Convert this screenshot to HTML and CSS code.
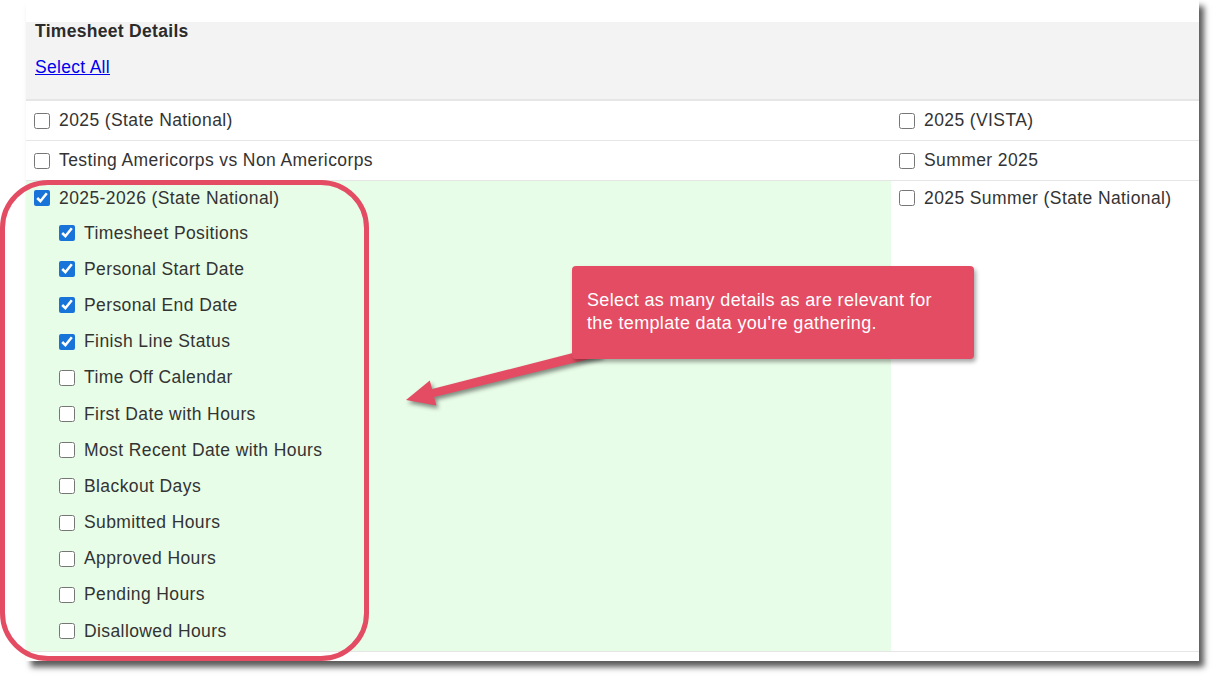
FILE: index.html
```html
<!DOCTYPE html>
<html>
<head>
<meta charset="utf-8">
<link rel="stylesheet" href="styles.css">
</head>
<body>
<div class="stage">
  <div class="panel">
    <div class="header">
      <h3 class="title">Timesheet Details</h3>
      <a class="select-all" href="#">Select All</a>
    </div>
    <div class="row">
      <div class="cell"><label class="item"><input type="checkbox"><span>2025 (State National)</span></label></div>
      <div class="cell right"><label class="item"><input type="checkbox"><span>2025 (VISTA)</span></label></div>
    </div>
    <div class="row">
      <div class="cell"><label class="item"><input type="checkbox"><span>Testing Americorps vs Non Americorps</span></label></div>
      <div class="cell right"><label class="item"><input type="checkbox"><span>Summer 2025</span></label></div>
    </div>
    <div class="row row-open">
      <div class="cell selected">
        <label class="item main"><input type="checkbox" checked><span>2025-2026 (State National)</span></label>
        <div class="subs">
          <label class="item sub"><input type="checkbox" checked><span>Timesheet Positions</span></label>
          <label class="item sub"><input type="checkbox" checked><span>Personal Start Date</span></label>
          <label class="item sub"><input type="checkbox" checked><span>Personal End Date</span></label>
          <label class="item sub"><input type="checkbox" checked><span>Finish Line Status</span></label>
          <label class="item sub"><input type="checkbox"><span>Time Off Calendar</span></label>
          <label class="item sub"><input type="checkbox"><span>First Date with Hours</span></label>
          <label class="item sub"><input type="checkbox"><span>Most Recent Date with Hours</span></label>
          <label class="item sub"><input type="checkbox"><span>Blackout Days</span></label>
          <label class="item sub"><input type="checkbox"><span>Submitted Hours</span></label>
          <label class="item sub"><input type="checkbox"><span>Approved Hours</span></label>
          <label class="item sub"><input type="checkbox"><span>Pending Hours</span></label>
          <label class="item sub"><input type="checkbox"><span>Disallowed Hours</span></label>
        </div>
      </div>
      <div class="cell right"><label class="item main"><input type="checkbox"><span>2025 Summer (State National)</span></label></div>
    </div>
  </div>

  <div class="ring"></div>
  <svg class="arrow" width="1222" height="684" viewBox="0 0 1222 684">
    <polygon points="600,346 602,356 434.1,396.9 436.4,405.6 406,400 429.8,380.4 432.1,389.1"/>
  </svg>
  <div class="callout">Select as many details as are relevant for the template data you're gathering.</div>
</div>
</body>
</html>
```
FILE: styles.css
```css
html, body {
  margin: 0;
  padding: 0;
  background: #ffffff;
}

body {
  font-family: "Liberation Sans", Arial, sans-serif;
  color: #333333;
}

.stage {
  position: relative;
  width: 1222px;
  height: 684px;
  overflow: hidden;
}

.panel {
  margin-left: 26px;
  width: 1173px;
  padding-top: 22px;
  padding-bottom: 9px;
  background: #ffffff;
  box-shadow: 5px 6px 6px rgba(0, 0, 0, 0.65);
}

.header {
  height: 77px;
  background: #f3f3f3;
  border-bottom: 2px solid #e6e6e6;
  padding: 0 9px;
  display: flex;
  flex-direction: column;
  align-items: flex-start;
}

.title {
  margin: 0;
  font-size: 17.5px;
  line-height: 18px;
  font-weight: bold;
  letter-spacing: 0.3px;
  color: #2b2b2b;
}

.select-all {
  display: block;
  margin-top: 18px;
  font-size: 17.5px;
  line-height: 18px;
  letter-spacing: 0.3px;
  color: #0000ee;
}

.row {
  display: grid;
  grid-template-columns: 865px 1fr;
  border-bottom: 1px solid #e6e6e6;
}

.cell {
  height: 39px;
  padding-left: 8px;
  display: flex;
  align-items: center;
}

.row-open .cell {
  height: 470px;
  display: block;
}

.cell.selected {
  background: #e8fde8;
}

.item {
  display: flex;
  align-items: center;
  gap: 9px;
  font-size: 17.5px;
  letter-spacing: 0.4px;
  color: #333333;
}

.item input {
  width: 16px;
  height: 16px;
  margin: 0;
  accent-color: #1874d8;
}

.item.main {
  height: 34px;
}

.subs {
  padding-left: 25px;
}

.item.sub {
  height: 36.2px;
}

.ring {
  position: absolute;
  left: 0;
  top: 180px;
  width: 359px;
  height: 471px;
  border: 5px solid #e34c63;
  border-radius: 48px;
}

.arrow {
  position: absolute;
  left: 0;
  top: 0;
  fill: #e34c63;
  filter: drop-shadow(2px 3px 2px rgba(0, 0, 0, 0.45));
}

.callout {
  position: absolute;
  left: 572px;
  top: 266px;
  width: 402px;
  height: 93px;
  box-sizing: border-box;
  padding: 23px 30px 0 15px;
  background: #e34c63;
  border-radius: 4px;
  box-shadow: 2px 3px 4px rgba(0, 0, 0, 0.35);
  color: #ffffff;
  font-size: 18px;
  letter-spacing: 0.35px;
  line-height: 23px;
}
```
